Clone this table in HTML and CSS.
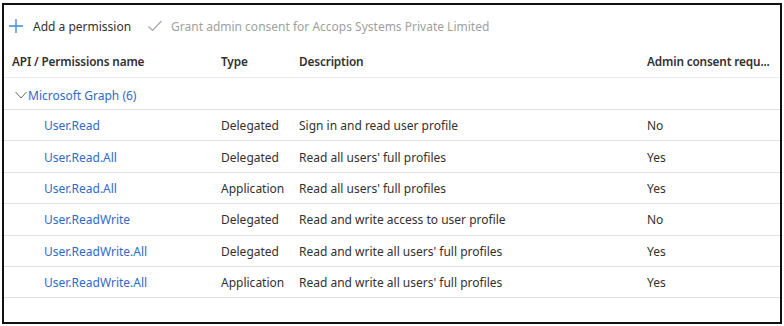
FILE: index.html
```html
<!DOCTYPE html>
<html lang="en">
<head>
    <meta charset="UTF-8">
    <title>API permissions</title>
    <link rel="stylesheet" href="styles.css">
</head>
<body>
    <div class="frame">
        <!-- Command bar -->
        <div class="toolbar">
            <span class="cmd">
                <svg class="icon-plus" width="16" height="16" viewBox="0 0 16 16">
                    <path d="M8 1v14M1 8h14" stroke="#3a86d6" stroke-width="1.3" fill="none"/>
                </svg>
                Add a permission
            </span>
            <span class="cmd disabled">
                <svg class="icon-check" width="16" height="14" viewBox="0 0 16 14">
                    <path d="M1.5 7.5l4 4L14.5 2" stroke="#a7a5a3" stroke-width="1.2" fill="none"/>
                </svg>
                Grant admin consent for Accops Systems Private Limited
            </span>
        </div>

        <table class="perms">
            <thead>
                <tr>
                    <th class="col-name">API / Permissions name</th>
                    <th class="col-type">Type</th>
                    <th class="col-desc">Description</th>
                    <th class="col-admin">Admin consent requ...</th>
                </tr>
            </thead>
            <tbody>
                <tr class="group">
                    <td colspan="4">
                        <span class="group-link">
                            <svg class="chev" width="12" height="8" viewBox="0 0 12 8">
                                <path d="M0.5 1l5.5 6 5.5-6" stroke="#6a6866" stroke-width="1" fill="none"/>
                            </svg>Microsoft Graph (6)
                        </span>
                    </td>
                </tr>
                <tr>
                    <td class="perm"><a href="#">User.Read</a></td>
                    <td>Delegated</td>
                    <td>Sign in and read user profile</td>
                    <td>No</td>
                </tr>
                <tr>
                    <td class="perm"><a href="#">User.Read.All</a></td>
                    <td>Delegated</td>
                    <td>Read all users' full profiles</td>
                    <td>Yes</td>
                </tr>
                <tr>
                    <td class="perm"><a href="#">User.Read.All</a></td>
                    <td>Application</td>
                    <td>Read all users' full profiles</td>
                    <td>Yes</td>
                </tr>
                <tr>
                    <td class="perm"><a href="#">User.ReadWrite</a></td>
                    <td>Delegated</td>
                    <td>Read and write access to user profile</td>
                    <td>No</td>
                </tr>
                <tr>
                    <td class="perm"><a href="#">User.ReadWrite.All</a></td>
                    <td>Delegated</td>
                    <td>Read and write all users' full profiles</td>
                    <td>Yes</td>
                </tr>
                <tr>
                    <td class="perm"><a href="#">User.ReadWrite.All</a></td>
                    <td>Application</td>
                    <td>Read and write all users' full profiles</td>
                    <td>Yes</td>
                </tr>
            </tbody>
        </table>
    </div>
</body>
</html>
```

FILE: styles.css
```css
html, body {
    margin: 0;
    padding: 0;
    background: white;
}

body {
    font-family: 'Noto Sans', 'Open Sans', sans-serif;
    font-size: 12px;
    color: #323130;
}

/* Black outline around the whole capture */
.frame {
    margin: 3px 0 0 2px;
    width: 776px;
    height: 317px;
    border: 2px solid #111;
    overflow: hidden;
}

.toolbar {
    display: flex;
    align-items: center;
    gap: 16px;
    height: 36px;
    padding: 3px 0 0 4px;
}

.cmd {
    display: flex;
    align-items: center;
    gap: 9px;
    color: #323130;
}

.cmd.disabled {
    color: #a19f9d;
    gap: 8px;
}

.perms {
    width: 100%;
    border-collapse: collapse;
    table-layout: fixed;
}

.perms th {
    font-weight: 600;
    font-size: 11.8px;
    letter-spacing: -0.15px;
    text-align: left;
    height: 32px;
    padding: 1px 0 0;
    white-space: nowrap;
    overflow: hidden;
    border-bottom: 1px solid #edebe9;
}

.perms td {
    height: 29.4px;
    padding: 1px 0 0;
    border-bottom: 1px solid #e1dfdd;
    white-space: nowrap;
}

.col-name { width: 209px; padding-left: 8px !important; }
.col-type { width: 78px; }
.col-desc { width: 348px; }

.group td {
    height: 28px;
    padding-top: 3px;
    padding-left: 11px;
}

.group-link {
    display: inline-flex;
    align-items: center;
    color: #2f6bc9;
}

.chev {
    margin-right: 1px;
}

.perm {
    padding-left: 40px !important;
}

.perm a {
    color: #2f6bc9;
    text-decoration: none;
}
```
